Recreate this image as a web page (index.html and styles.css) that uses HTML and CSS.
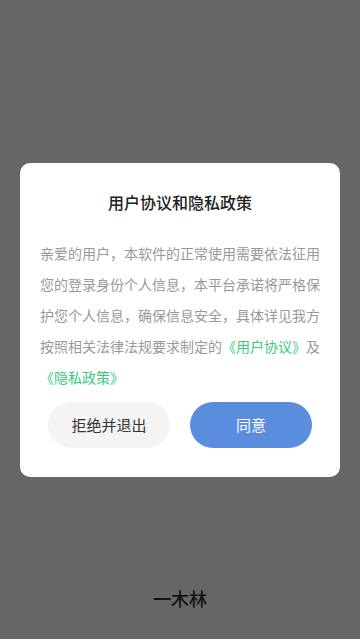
FILE: index.html
```html
<!DOCTYPE html>
<html lang="zh-CN">
  <head>
    <meta charset="UTF-8" />
    <meta name="viewport" content="width=device-width, initial-scale=1.0" />
    <title>一木林</title>
    <link rel="stylesheet" href="styles.css">
  </head>

  <body>
    <div class="page">
      <div class="brand">一木林</div>
    </div>

    <div class="mask">
      <div class="dialog">
        <h2>用户协议和隐私政策</h2>
        <p class="content">
          亲爱的用户，本软件的正常使用需要依法征用您的登录身份个人信息，本平台承诺将严格保护您个人信息，确保信息安全，具体详见我方按照相关法律法规要求制定的<a href="#">《用户协议》</a>及<a href="#">《隐私政策》</a>
        </p>
        <div class="actions">
          <button class="btn btn-cancel">拒绝并退出</button>
          <button class="btn btn-ok">同意</button>
        </div>
      </div>
    </div>
  </body>
</html>
```

FILE: styles.css
```css
* {
  box-sizing: border-box;
}

body {
  margin: 0;
  height: 100vh;
  background-color: #fff;
  font-family: "Noto Sans CJK SC", "Noto Sans", sans-serif;
}

.page {
  height: 100vh;
  display: flex;
  flex-direction: column;
  justify-content: flex-end;
  align-items: center;
  padding-bottom: 28px;
}

.brand {
  font-size: 18px;
  font-weight: 500;
  color: #333;
  line-height: 26px;
}

.mask {
  position: fixed;
  top: 0;
  left: 0;
  right: 0;
  bottom: 0;
  background: rgba(0, 0, 0, 0.6);
  display: flex;
  justify-content: center;
  align-items: center;
}

.dialog {
  width: 320px;
  background: #fff;
  border-radius: 10px;
  padding: 28px 20px 29px;
}

.dialog h2 {
  margin: 0 0 25px;
  text-align: center;
  font-size: 16px;
  line-height: 22px;
  font-weight: 500;
  color: #222;
}

.content {
  margin: 0 0 9px;
  font-size: 14px;
  line-height: 31px;
  color: #999;
  text-align: justify;
}

.content a {
  color: #3cc97a;
  text-decoration: none;
}

.actions {
  display: flex;
  justify-content: center;
  gap: 20px;
}

.btn {
  width: 122px;
  height: 46px;
  border: none;
  border-radius: 23px;
  font-family: inherit;
  font-size: 15px;
  cursor: pointer;
}

.btn-cancel {
  background-color: #f4f4f4;
  color: #333;
}

.btn-ok {
  background-color: #5b8ddf;
  color: #fff;
}
```
